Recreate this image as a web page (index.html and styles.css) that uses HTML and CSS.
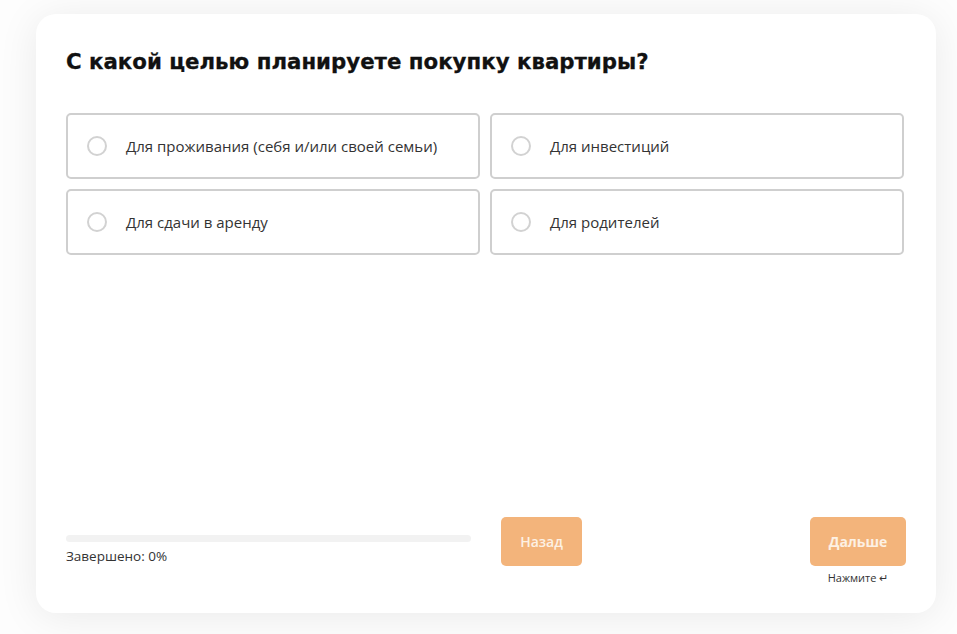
FILE: index.html
```html
<!DOCTYPE html>
<html lang="ru">
<head>
<meta charset="utf-8">
<title>Квиз</title>
<link rel="stylesheet" href="styles.css">
</head>
<body>
<div class="page">
  <div class="card">
    <h1 class="title">С какой целью планируете покупку квартиры?</h1>
    <div class="options">
      <label class="option"><span class="radio"></span><span class="opt-text">Для проживания (себя и/или своей семьи)</span></label>
      <label class="option"><span class="radio"></span><span class="opt-text">Для инвестиций</span></label>
      <label class="option"><span class="radio"></span><span class="opt-text">Для сдачи в аренду</span></label>
      <label class="option"><span class="radio"></span><span class="opt-text">Для родителей</span></label>
    </div>
    <div class="footer">
      <div class="progress">
        <div class="bar"></div>
        <div class="progress-text">Завершено: 0%</div>
      </div>
      <button class="btn back">Назад</button>
      <div class="next-wrap">
        <button class="btn next">Дальше</button>
        <div class="hint">Нажмите ↵</div>
      </div>
    </div>
  </div>
</div>
</body>
</html>
```
FILE: styles.css
```css
html, body {
  margin: 0;
  padding: 0;
  background: #fdfdfd;
  font-family: "Open Sans", "Noto Sans", sans-serif;
  color: #222;
}
.page {
  padding: 14px 21px 21px 36px;
}
.card {
  background: #fff;
  border-radius: 20px;
  box-shadow: 0 4px 40px rgba(0,0,0,0.08);
  height: 599px;
  box-sizing: border-box;
  padding: 32px 30px 28px 30px;
  display: flex;
  flex-direction: column;
}
.title {
  margin: 0;
  font-family: "DejaVu Sans", sans-serif;
  font-weight: 700;
  font-size: 21.3px;
  line-height: 32px;
  color: #111;
  -webkit-text-stroke: 0.3px #111;
}
.options {
  margin-top: 35px;
  display: grid;
  grid-template-columns: 414px 414px;
  gap: 10px;
}
.option {
  height: 66px;
  box-sizing: border-box;
  border: 2px solid #cfcfcf;
  border-radius: 5px;
  display: flex;
  align-items: center;
  padding-left: 19px;
}
.radio {
  width: 20px;
  height: 20px;
  box-sizing: border-box;
  border: 2px solid #d2d2d2;
  border-radius: 50%;
  flex: none;
}
.opt-text {
  margin-left: 19px;
  font-size: 15px;
  color: #333;
}
.footer {
  margin-top: auto;
  display: flex;
  align-items: flex-start;
}
.progress {
  width: 405px;
  padding-top: 18px;
}
.bar {
  height: 7px;
  border-radius: 4px;
  background: #f2f2f2;
}
.progress-text {
  margin-top: 5px;
  font-size: 13.5px;
  color: #333;
}
.btn {
  border: none;
  border-radius: 5px;
  background: #f3b47b;
  color: #fdf1e4;
  font-family: "Open Sans", "Noto Sans", sans-serif;
  font-weight: 600;
  font-size: 14px;
  height: 49px;
  padding: 0;
}
.back {
  width: 81px;
  margin-left: 30px;
}
.next-wrap {
  margin-left: auto;
  display: flex;
  flex-direction: column;
  align-items: center;
}
.next {
  width: 96px;
  font-weight: 700;
}
.hint {
  margin-top: 4px;
  font-size: 11px;
  color: #333;
}
```
